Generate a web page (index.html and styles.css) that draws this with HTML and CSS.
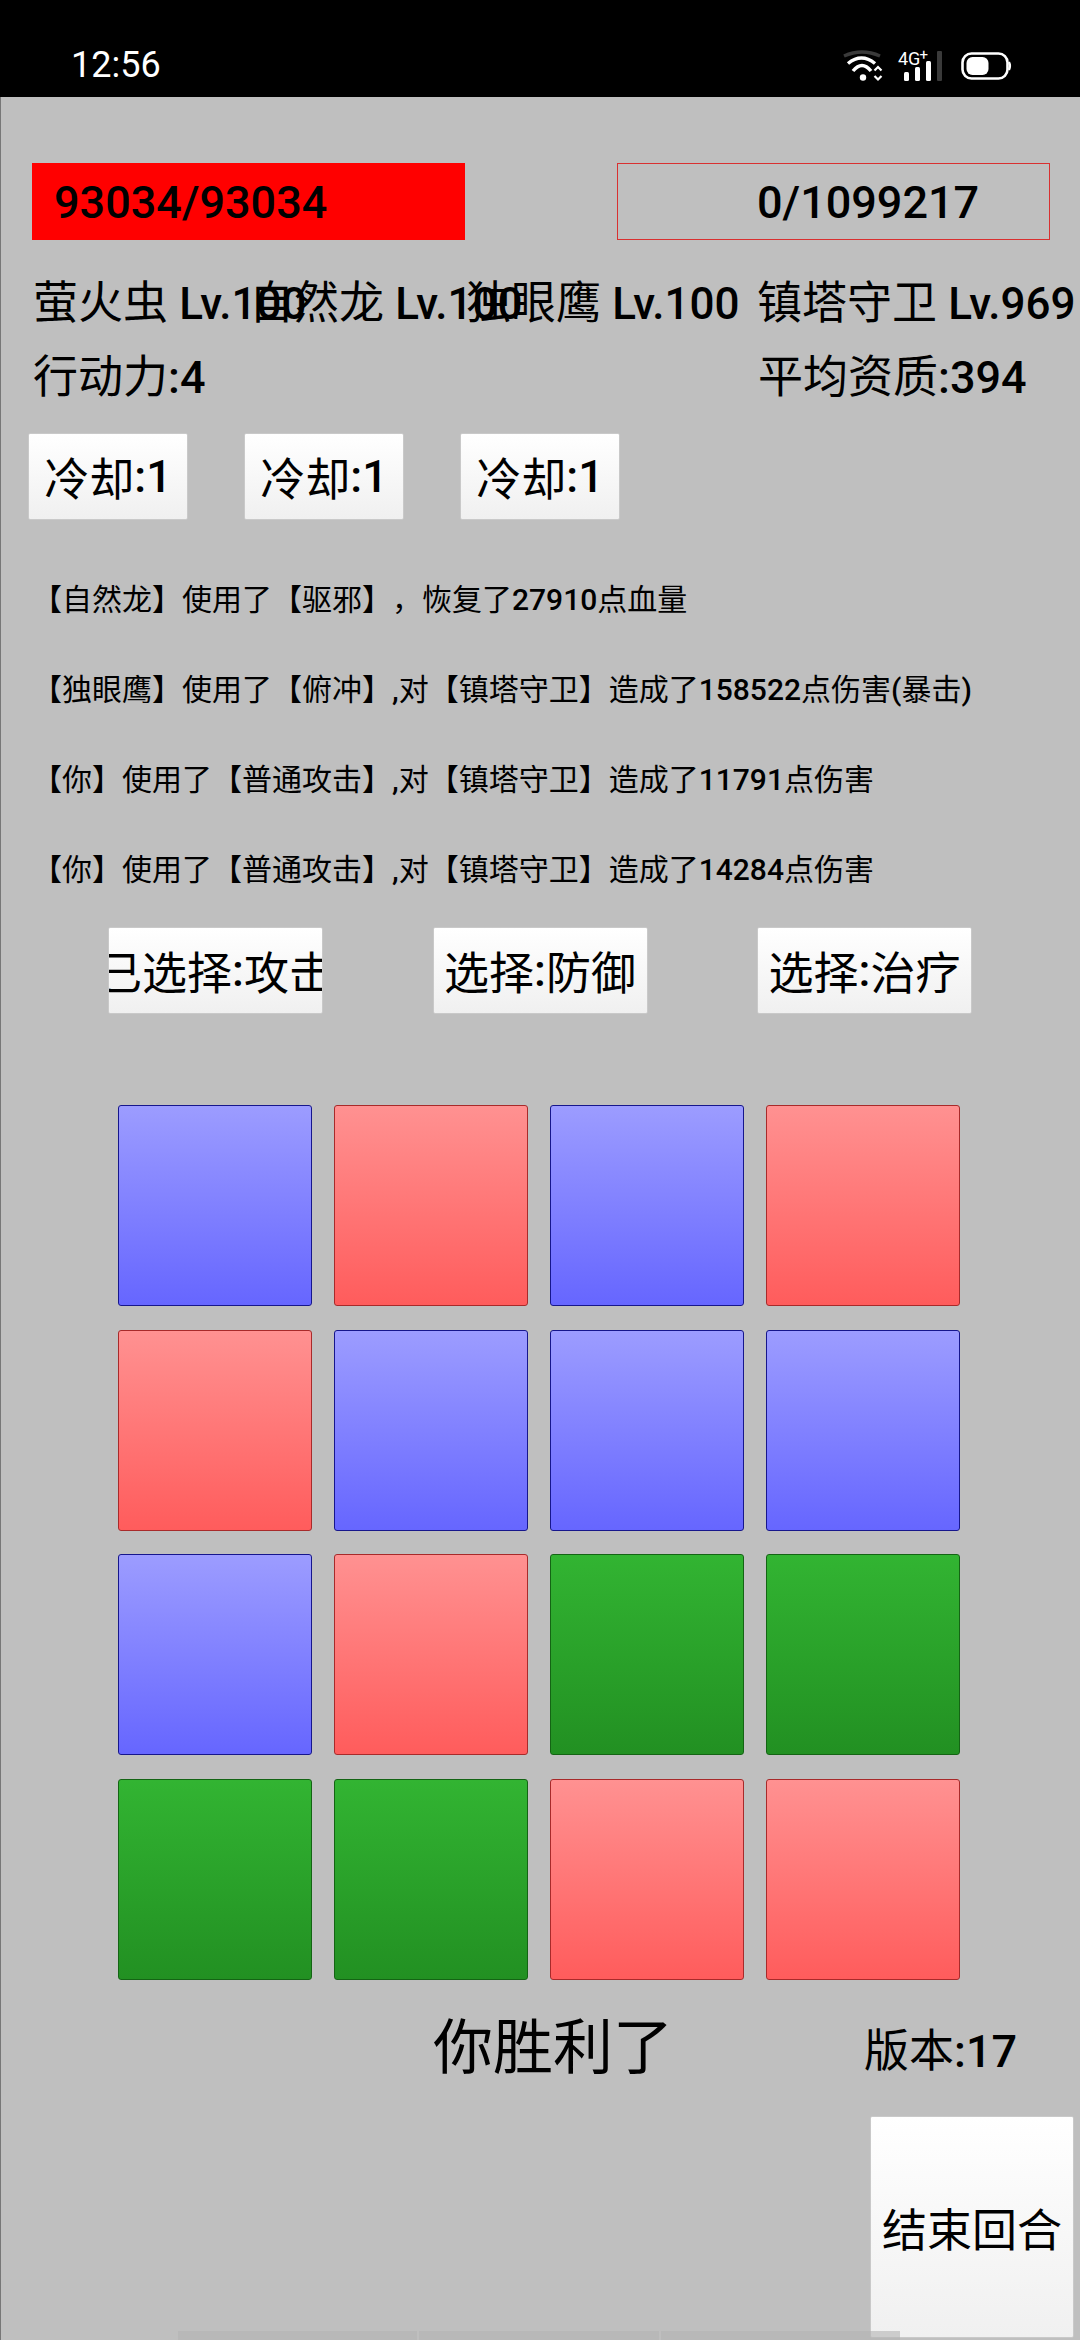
FILE: index.html
```html
<!DOCTYPE html>
<html>
<head>
  <title>镇塔</title>
  <link rel="stylesheet" href="styles.css">
</head>
<body>
  <div class="status-bar">
    <span class="time">12:56</span>
    <div class="status-icons">
      <svg class="icon-wifi" width="40" height="30" viewBox="0 0 40 30">
        <path d="M1 5 Q19 -3 37 5" fill="none" stroke="#3a3a3a" stroke-width="3.5"/>
        <path d="M5 12.5 Q18.5 1.5 32 12.5" fill="none" stroke="#fff" stroke-width="3.5"/>
        <path d="M10 20 Q19 9 28 20" fill="none" stroke="#fff" stroke-width="3.5"/>
        <circle cx="20" cy="26.5" r="3.2" fill="#fff"/>
        <path d="M31.5 19.5 L35 16 L38.5 19.5 M31.5 25 L35 28.5 L38.5 25" fill="none" stroke="#fff" stroke-width="2.2"/>
      </svg>
      <svg class="icon-signal" width="44" height="30" viewBox="0 0 44 30">
        <text x="0" y="14" class="net-text">4G</text>
        <text x="21.5" y="9" class="net-plus">+</text>
        <rect x="6" y="21" width="5" height="9" rx="1.5" fill="#fff"/>
        <rect x="17" y="16" width="5" height="14" rx="1.5" fill="#fff"/>
        <rect x="28" y="10" width="5" height="20" rx="1.5" fill="#fff"/>
        <rect x="39" y="0" width="5" height="30" rx="1" fill="#3a3a3a"/>
      </svg>
      <svg class="icon-battery" width="50" height="28" viewBox="0 0 50 28">
        <rect x="1.5" y="1.5" width="45" height="25" rx="9" fill="none" stroke="#fff" stroke-width="2.6"/>
        <rect x="5.5" y="5" width="22" height="18" rx="6" fill="#fff"/>
        <path d="M48 10 Q50 14 48 18" fill="none" stroke="#fff" stroke-width="2.2"/>
      </svg>
    </div>
  </div>

  <div class="game">
    <div class="hp-row">
      <div class="hp-bar hp-player">93034/93034</div>
      <div class="hp-bar hp-boss">0/1099217</div>
    </div>

    <div class="names">
      <span>萤火虫 <span class="n">Lv.100</span></span>
      <span>自然龙 <span class="n">Lv.100</span></span>
      <span>独眼鹰 <span class="n">Lv.100</span></span>
      <span>镇塔守卫 <span class="n">Lv.969</span></span>
    </div>
    <div class="stats">
      <span>行动力<span class="n">:4</span></span>
      <span>平均资质<span class="n">:394</span></span>
    </div>

    <div class="skills">
      <div class="btn skill">冷却<span class="n">:1</span></div>
      <div class="btn skill">冷却<span class="n">:1</span></div>
      <div class="btn skill">冷却<span class="n">:1</span></div>
    </div>

    <div class="log">
      <p>【自然龙】使用了【驱邪】<span class="comma" lang="ko">，</span>恢复了<span class="n">27910</span>点血量</p>
      <p>【独眼鹰】使用了【俯冲】<span class="n">,</span>对【镇塔守卫】造成了<span class="n">158522</span>点伤害<span class="n">(</span>暴击<span class="n">)</span></p>
      <p>【你】使用了【普通攻击】<span class="n">,</span>对【镇塔守卫】造成了<span class="n">11791</span>点伤害</p>
      <p>【你】使用了【普通攻击】<span class="n">,</span>对【镇塔守卫】造成了<span class="n">14284</span>点伤害</p>
    </div>

    <div class="choices">
      <div class="btn choice">已选择<span class="n">:</span>攻击</div>
      <div class="btn choice">选择<span class="n">:</span>防御</div>
      <div class="btn choice">选择<span class="n">:</span>治疗</div>
    </div>

    <div class="board">
      <div class="tile blue"></div>
      <div class="tile red"></div>
      <div class="tile blue"></div>
      <div class="tile red"></div>
      <div class="tile red"></div>
      <div class="tile blue"></div>
      <div class="tile blue"></div>
      <div class="tile blue"></div>
      <div class="tile blue"></div>
      <div class="tile red"></div>
      <div class="tile green"></div>
      <div class="tile green"></div>
      <div class="tile green"></div>
      <div class="tile green"></div>
      <div class="tile red"></div>
      <div class="tile red"></div>
    </div>

    <div class="result-row">
      <span class="result">你胜利了</span>
      <span class="version">版本<span class="n">:17</span></span>
    </div>

    <div class="end-row">
      <div class="btn end-turn">结束回合</div>
    </div>

    <div class="scroll-hint">
      <span></span>
      <span></span>
      <span></span>
    </div>
  </div>
</body>
</html>
```

FILE: styles.css
```css
html, body {
  margin: 0;
  padding: 0;
}
body {
  width: 1080px;
  height: 2340px;
  overflow: hidden;
  background-color: #bfbfbf;
  color: #000;
  font-family: Roboto, "Noto Sans CJK SC", sans-serif;
}

/* latin text and digits are heavier than the chinese */
.n {
  font-weight: 500;
}
.comma {
  font-family: "Noto Sans CJK KR", sans-serif;
  line-height: 1;
}

/* status bar */
.status-bar {
  height: 97px;
  background-color: #000;
  color: #fff;
  display: flex;
  align-items: center;
  justify-content: space-between;
  padding: 0 69px 0 71px;
  box-sizing: border-box;
}
.time {
  font-size: 36px;
  margin-top: 33px;
}
.status-icons {
  display: flex;
  align-items: center;
  gap: 15px;
  margin-top: 35px;
}
.status-icons svg {
  overflow: visible;
}
.icon-battery {
  margin-left: 4px;
}
.net-text {
  font-family: Roboto, sans-serif;
  font-size: 18px;
  fill: #fff;
}
.net-plus {
  font-family: Roboto, sans-serif;
  font-size: 15px;
  fill: #fff;
}

.game {
  position: relative;
  height: 2243px;
  box-sizing: border-box;
  border-left: 1px solid #777;
  padding: 66px 0 0 1px;
}

.hp-row {
  display: flex;
  justify-content: space-between;
  padding: 0 30px;
}
.hp-bar {
  width: 433px;
  height: 77px;
  box-sizing: border-box;
  font-size: 45px;
  font-weight: 500;
  line-height: 78px;
  border: 1px solid #d93030;
}
.hp-player {
  background-color: #f00;
  border-color: #f00;
  padding-left: 21px;
}
.hp-boss {
  padding-left: 139px;
}

.names {
  display: grid;
  grid-template-columns: 216px 217px 291px auto;
  margin: 27px 0 0 31px;
  font-size: 45px;
  line-height: 74px;
  white-space: nowrap;
}
.names .n {
  font-size: 44px;
}
.stats {
  display: grid;
  grid-template-columns: 725px auto;
  margin-left: 31px;
  font-size: 45px;
  line-height: 74px;
  white-space: nowrap;
}

.btn {
  display: flex;
  align-items: center;
  justify-content: center;
  overflow: hidden;
  white-space: nowrap;
  box-sizing: border-box;
  background: linear-gradient(#ffffff, #f0f0f0);
  border: 1px solid #c9c9c9;
  border-radius: 2px;
  font-size: 45px;
}

.skills {
  display: flex;
  gap: 56px;
  margin: 18px 0 0 26px;
}
.skill {
  width: 160px;
  height: 87px;
}

.log {
  margin: 35px 0 0 30px;
  text-spacing-trim: space-all;
}
.log p {
  margin: 0;
  height: 90px;
  font-size: 30px;
  line-height: 90px;
  white-space: nowrap;
}

.choices {
  display: flex;
  gap: 109.5px;
  margin: 12px 0 0 106px;
}
.choice {
  width: 215px;
  height: 87px;
}

.board {
  display: grid;
  grid-template-columns: repeat(4, 194px);
  grid-auto-rows: 201px;
  column-gap: 22px;
  row-gap: 23.7px;
  margin: 91px 0 0 116px;
}
.tile {
  box-sizing: border-box;
  border-radius: 3px;
  border: 1px solid;
}
.blue {
  background: linear-gradient(#9c9cff, #6666ff);
  border-color: #16168c;
}
.red {
  background: linear-gradient(#ff9191, #ff5c5c);
  border-color: #a82a2a;
}
.green {
  background: linear-gradient(#32b432, #229022);
  border-color: #146414;
}

.result-row {
  display: flex;
  align-items: center;
  margin: 19px 0 0 431px;
  height: 86px;
}
.result {
  font-size: 60px;
  width: 431px;
}
.version {
  font-size: 45px;
  margin-top: 10px;
}

.end-row {
  display: flex;
  justify-content: flex-end;
  padding-right: 6px;
  margin-top: 31px;
}
.end-turn {
  width: 204px;
  height: 222px;
}

.scroll-hint {
  position: absolute;
  left: 177px;
  bottom: 0;
  width: 722px;
  height: 9px;
  display: flex;
  gap: 2px;
  opacity: 0.6;
}
.scroll-hint span {
  flex: 1;
  background-color: #b4b4b4;
}
```
